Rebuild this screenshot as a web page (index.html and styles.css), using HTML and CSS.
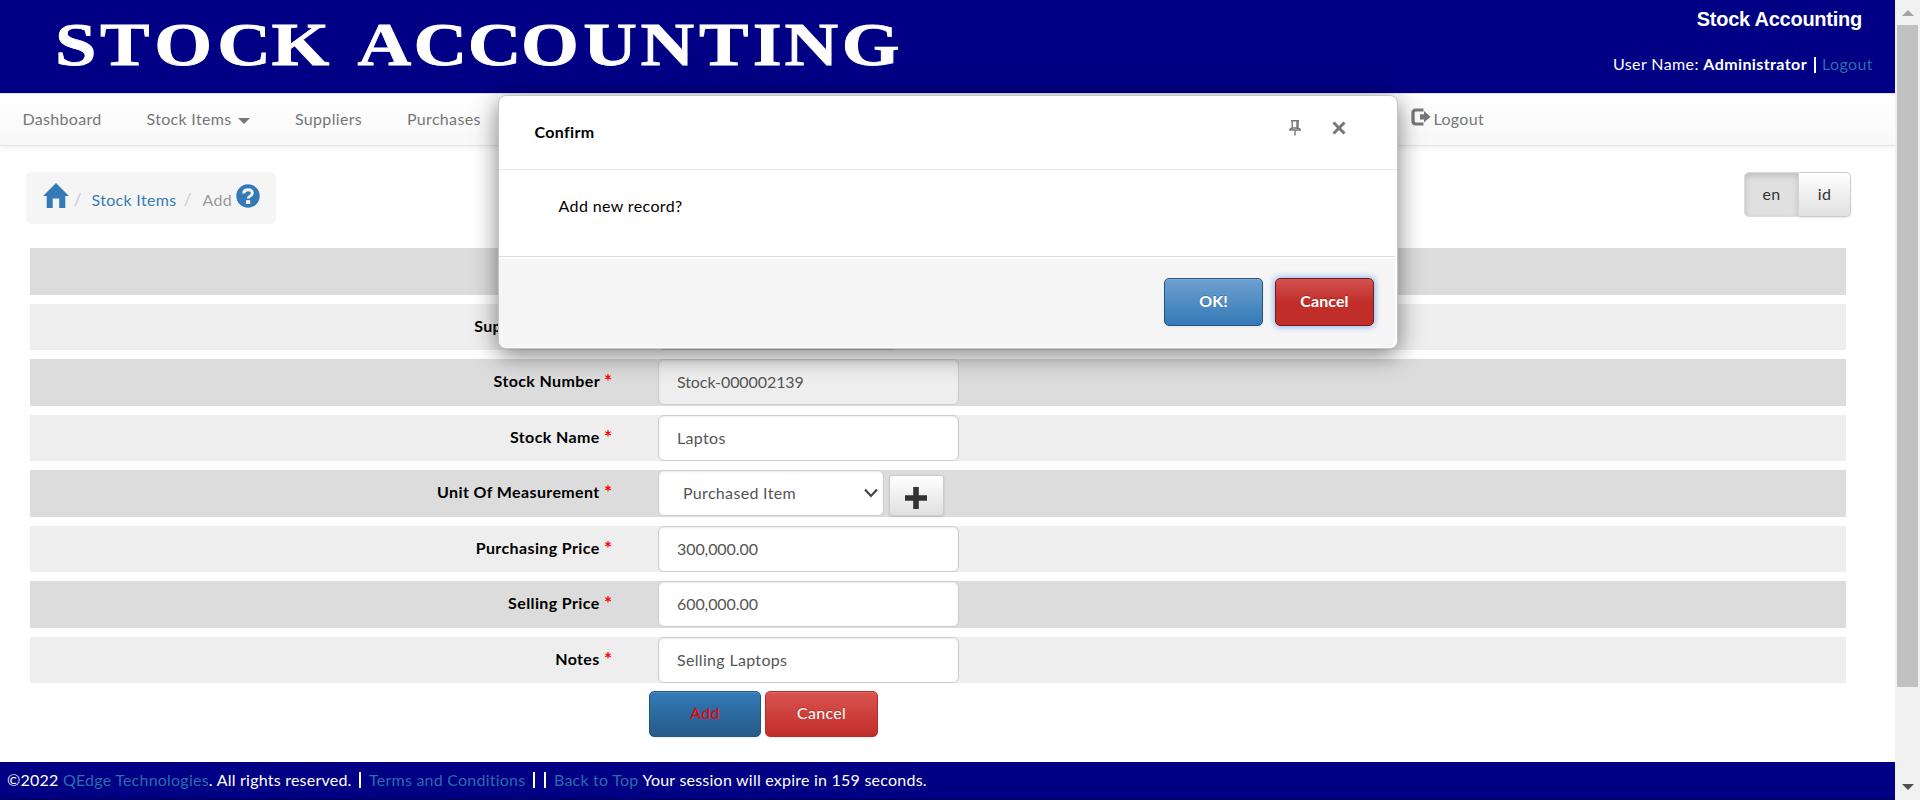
FILE: index.html
```html
<!DOCTYPE html>
<html lang="en">
<head>
<meta charset="utf-8">
<title>Stock Accounting</title>
<link rel="stylesheet" href="styles.css">
</head>
<body>
<div class="window">
  <div class="page">
    <header class="header">
      <svg class="logo" width="920" height="93" viewBox="0 0 920 93" role="img" aria-label="Stock Accounting">
        <g transform="scale(1.22 1)"><text class="logo-text" y="65.2" x="45 82 126.5 178 222.5 293 339 383.5 427 478 525 573 617 643 690">STOCKACCOUNTING</text></g>
      </svg>
      <div class="account">
        <div class="site-name">Stock Accounting</div>
        <div class="user">User Name: <b>Administrator</b> <i class="bar"></i> <a class="link">Logout</a></div>
      </div>
    </header>
    <nav class="navbar">
      <a>Dashboard</a>
      <a>Stock Items <i class="caret"></i></a>
      <a>Suppliers</a>
      <a>Purchases</a>
      <a class="nav-logout"><svg class="ico-out" width="20" height="18" viewBox="0 0 20 18"><path d="M12.5 2H5Q2 2 2 5V13Q2 16 5 16H12.5" fill="none" stroke="#777" stroke-width="3.2"/><path d="M9 6.2H13V3L19.6 8.8L13 14.6V11.6H9Z" fill="#777"/></svg>Logout</a>
    </nav>
    <div class="topline">
      <div class="breadcrumb">
        <svg class="home" width="26" height="25" viewBox="0 0 26 25"><path d="M13 0L26 13H22.3V25H16.2V15.5H9.7V25H3.7V13H0L4.5 8.5Z" fill="#337ab7"/></svg>
        <span class="slash">/</span>
        <a class="crumb-link">Stock Items</a>
        <span class="slash">/</span>
        <span class="crumb-add">Add</span>
        <svg class="help" width="24" height="24" viewBox="0 0 24 24"><circle cx="12" cy="12" r="11.7" fill="#337ab7"/><path d="M7.8 9.6V8.8Q8 5.8 12.2 5.8T16.3 9Q16.3 10.9 14.3 12Q12.3 13 12.3 14.4" fill="none" stroke="#f5f5f5" stroke-width="3"/><path d="M10 16.2H14.2V20H10Z" fill="#f5f5f5"/></svg>
      </div>
      <div class="langs"><button class="lang active">en</button><button class="lang">id</button></div>
    </div>
    <form class="form">
      <div class="row dark"></div>
      <div class="row"><label>Supplier Number <sup>*</sup></label><div class="select supplier"></div></div>
      <div class="row dark"><label>Stock Number <sup>*</sup></label><div class="input numeric readonly">Stock-000002139</div></div>
      <div class="row"><label>Stock Name <sup>*</sup></label><div class="input">Laptos</div></div>
      <div class="row dark"><label>Unit Of Measurement <sup>*</sup></label><div class="select">Purchased Item<svg width="14" height="10" viewBox="0 0 14 10"><path d="M1 1.5L7 8L13 1.5" fill="none" stroke="#444" stroke-width="2.2"/></svg></div><button type="button" class="plus"><svg width="22" height="22" viewBox="0 0 22 22"><path d="M8.2 0H13.8V8.2H22V13.8H13.8V22H8.2V13.8H0V8.2H8.2Z" fill="#333"/></svg></button></div>
      <div class="row"><label>Purchasing Price <sup>*</sup></label><div class="input numeric">300,000.00</div></div>
      <div class="row dark"><label>Selling Price <sup>*</sup></label><div class="input numeric">600,000.00</div></div>
      <div class="row"><label>Notes <sup>*</sup></label><div class="input">Selling Laptops</div></div>
    </form>
    <div class="actions"><button class="btn add">Add</button><button class="btn cancel">Cancel</button></div>
    <footer class="footer"><span>©2022 <a class="link">QEdge Technologies</a>. All rights reserved.</span><i class="bar"></i><a class="link">Terms and Conditions</a><i class="bar"></i><i class="bar"></i><a class="link">Back to Top</a><span class="session">Your session will expire in 159 seconds.</span></footer>
  </div>
  <div class="scrollbar"><i class="arrow up"></i><i class="thumb"></i><i class="arrow down"></i></div>
</div>
<div class="dialog" role="dialog">
  <div class="dialog-head"><b>Confirm</b>
    <svg class="pin" width="12" height="16" viewBox="0 0 12 16"><path d="M2 .8H10M3.2 1V9M8 1V9M9 1V9M.8 10V9.3L3 8H9L11.2 9.3V10ZM6 10V15.5" fill="none" stroke="#777" stroke-width="1.4"/></svg>
    <svg class="close" width="14" height="14" viewBox="0 0 14 14"><path d="M1.5 1.5L12.5 12.5M12.5 1.5L1.5 12.5" stroke="#777" stroke-width="3"/></svg>
  </div>
  <div class="dialog-body">Add new record?</div>
  <div class="dialog-foot"><button class="btn ok">OK!</button><button class="btn danger">Cancel</button></div>
</div>
</body>
</html>
```
FILE: styles.css
```css
* { box-sizing: border-box; }
body { margin: 0; width: 1920px; height: 800px; overflow: hidden; background: #fff; font: 16px/25px Lato, "Open Sans", sans-serif; letter-spacing: .32px; color: #000; }
button { font: inherit; letter-spacing: inherit; margin: 0; padding: 0 0 3px; }
.window { display: flex; height: 800px; }
.page { width: 1895px; display: flex; flex-direction: column; }
.header { height: 93px; background: #000084; display: flex; justify-content: space-between; color: #fff; }
.logo { display: block; }
.logo-text { font: bold 61px "Liberation Serif", serif; fill: #fff; stroke: #fff; stroke-width: .8px; letter-spacing: 0; }
.account { text-align: right; padding: 6px 22px 0 0; }
.site-name { font: bold 20px/26px "Liberation Sans", Arial, sans-serif; letter-spacing: -.25px; padding-right: 11px; }
.user { margin-top: 19px; letter-spacing: .4px; }
.link { color: #2a6cae; }
.bar { display: inline-block; width: 2px; height: 16px; margin: 0 2px; background: #fff; vertical-align: -3px; }
.navbar { height: 53px; flex: none; background: linear-gradient(#fff, #f8f8f8); border-top: 1px solid #e0e0f0; border-bottom: 1px solid #e3e3e3; box-shadow: 0 1px 6px rgba(0,0,0,.08); display: grid; grid-template-columns: 124px 148.5px 112px 1003.5px auto; padding: 12px 0 0 22.5px; color: #777; }
.caret { display: inline-block; border: 6px solid transparent; border-top-color: #777; border-bottom: 0; margin-left: 2px; vertical-align: 1px; }
.ico-out { margin-right: 3px; vertical-align: -1px; }
.topline { display: flex; justify-content: space-between; padding: 26px 44px 0 26px; }
.breadcrumb { width: 250px; height: 52px; background: #f5f5f5; border-radius: 5px; display: grid; grid-template-columns: 31px 18px 92px 19px 33px auto; padding-left: 16.5px; text-shadow: 0 1px 0 #fff; line-height: 55px; }
.home { margin-top: 11px; }
.help { margin-top: 12px; }
.slash { color: #ccc; font-size: 18px; }
.crumb-link { color: #337ab7; }
.crumb-add { color: #999; }
.langs { display: flex; height: 45px; text-shadow: 0 1px 0 #fff; }
.lang { width: 52px; border: 1px solid #ccc; border-radius: 0 5px 5px 0; border-left: 0; background: linear-gradient(#fff, #e0e0e0); color: #333; box-shadow: 0 1px 2px rgba(0,0,0,.1); }
.lang.active { width: 55px; border: 1px solid #dbdbdb; border-radius: 5px 0 0 5px; background: #e0e0e0; box-shadow: inset 0 3px 6px rgba(0,0,0,.15); }
.form { padding: 24.2px 49px 0 30px; display: grid; grid-auto-rows: 46.5px; gap: 9px; }
.row { display: flex; background: #eee; }
.row.dark { background: #dcdcdc; }
.row label { width: 582px; flex: none; margin-right: 46px; text-align: right; font-weight: bold; letter-spacing: .38px; line-height: 44px; white-space: nowrap; }
sup { color: red; font-weight: bold; font-size: 19px; line-height: 0; vertical-align: -1px; letter-spacing: 0; }
.input, .select { height: 46px; width: 300.5px; flex: none; border: 1px solid #ccc; border-radius: 6px; background: #fff; color: #555; padding-left: 18px; line-height: 43px; box-shadow: inset 0 1px 2px rgba(0,0,0,.075); }
.numeric { letter-spacing: -.08px; }
.readonly { background: #eee; }
.select { width: 226px; padding: 0 5px 1px 24px; display: flex; justify-content: space-between; align-items: center; }
.supplier { width: 241px; }
.plus { width: 55px; height: 41px; margin: 5px 0 0 5px; border: 1px solid #ccc; border-radius: 3px; background: linear-gradient(#fff, #e0e0e0); box-shadow: 0 1px 2px rgba(0,0,0,.15); }
.plus svg { display: block; margin: 7px auto 0 15px; }
.actions { display: flex; gap: 4px; padding: 8px 0 0 649px; }
.btn { height: 46px; border: 1px solid; border-radius: 5px; color: #fff; text-shadow: 0 -1px 0 rgba(0,0,0,.2); box-shadow: inset 0 1px 0 rgba(255,255,255,.15), 0 1px 2px rgba(0,0,0,.08); }
.add { width: 112px; border-color: #245580; color: red; background: linear-gradient(#337ab7, #265a88); }
.cancel { width: 113px; border-color: #b92c28; background: linear-gradient(#d9534f, #c12e2a); }
.footer { margin-top: auto; height: 38px; background: #000084; border-bottom: 1px solid #00004c; color: #fff; display: flex; align-items: center; padding: 0 0 2px 7px; white-space: pre; letter-spacing: .23px; }
.footer .bar { margin: 1px 8px 0 7.5px; }
.footer .bar + .bar { margin-left: 1px; }
.session { margin-left: 4px; }
.scrollbar { width: 25px; background: #f1f1f1; display: flex; flex-direction: column; align-items: center; }
.arrow { border: 6px solid transparent; height: 0; }
.up { border-top: 0; border-bottom-color: #a3a3a3; margin-top: 10px; }
.down { border-bottom: 0; border-top-color: #505050; margin-top: 97px; }
.thumb { width: 21px; height: 662px; margin-top: 9px; background: #c1c1c1; }
.dialog { position: absolute; left: 498px; top: 95px; width: 900px; height: 254px; background: #fff; border: 1px solid #c4c4c4; border-radius: 8px; box-shadow: 0 6px 24px rgba(0,0,0,.5); }
.dialog-head { height: 74px; border-bottom: 1px solid #e5e5e5; display: flex; padding: 0 51px 0 35.5px; line-height: 72px; }
.dialog-head b { flex: 1; }
.pin { margin: 24px 31px 0 0; }
.close { margin-top: 25px; }
.dialog-body { height: 86px; padding: 23px 59.5px; letter-spacing: .38px; }
.dialog-foot { height: 91px; margin-right: 2px; border-top: 1px solid #ddd; background: #f5f5f5; box-shadow: inset 0 2px 0 #fff; display: flex; justify-content: flex-end; gap: 12px; padding: 21px 21px 0 0; border-radius: 0 0 6px 6px; }
.dialog-foot .btn { width: 99px; height: 48px; font-weight: bold; letter-spacing: .1px; }
.ok { border-color: #245580; background: linear-gradient(#6ea0cf, #337ab7); }
.danger { border-color: #761c19; background: linear-gradient(#d15350, #c12e2a 50%); box-shadow: 0 0 6px 1px #8ab4ee; }
```
